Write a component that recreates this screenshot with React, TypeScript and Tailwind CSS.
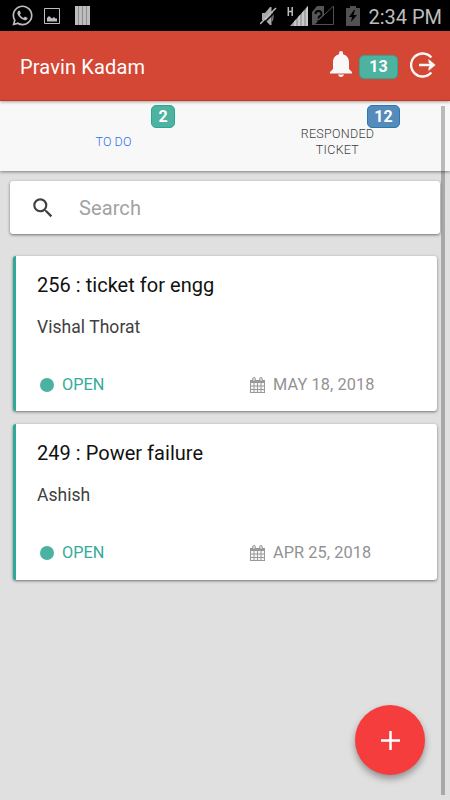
import { FaWhatsapp } from "react-icons/fa";
import { MdSearch } from "react-icons/md";

const tickets = [
    { id: 256, title: "ticket for engg", name: "Vishal Thorat", status: "OPEN", date: "MAY 18, 2018", size: "h-[155px]", gap: "mt-[18px]" },
    { id: 249, title: "Power failure", name: "Ashish", status: "OPEN", date: "APR 25, 2018", size: "h-[156px]", gap: "mt-[18px]" },
];

function StatusBar() {
    return (
        <div className="flex h-[31px] items-center bg-black pl-[11px] pr-2 text-[#bdbdbd]">
            <FaWhatsapp className="h-[23px] w-[23px]" />
            <svg className="ml-[10px] h-4 w-4" viewBox="0 0 16 16">
                <path d="M.5.5h15v15H.5z" fill="none" stroke="currentColor" />
                <path d="M3 13.500V10l2-2 3 2.500 2-1.500 1.500 1.500H13v3z" fill="currentColor" />
            </svg>
            <svg className="ml-[15px] h-[19px] w-[15px]" viewBox="0 0 15 19">
                <path d="M0 0h15v19H0z" fill="#8d8d8d" />
                <path d="M0 0h3v19H0zM4 0h3v19H4zM8 0h3v19H8zM12 0h3v19h-3z" fill="currentColor" />
            </svg>
            <div className="flex-1" />
            <svg className="h-5 w-[17px]" viewBox="0 0 17 20">
                <path d="M2 7h3l5-6h1.500v18H10l-5-5H2z" fill="#aaa" />
                <path d="M12 5q2 5 0 10" stroke="#777" strokeWidth="1.500" fill="none" />
                <path d="M1.500 19.500 17.500 3.500" stroke="#000" strokeWidth="1.500" />
                <path d="M0 18 16 2" stroke="#bdbdbd" strokeWidth="1.500" />
            </svg>
            <svg className="ml-[10px] h-5 w-[22px]" viewBox="0 0 22 20">
                <path d="M1.300 1v9M5.200 1v9M1 5.500h4" stroke="#bdbdbd" strokeWidth="1.500" fill="none" />
                <path d="M3 20 21 0v20z" fill="#a5a5a5" />
                <path d="M7 20v-4.400l2-2.200V20zM11 20v-8.900l2-2.200V20zM15 20V6.700l2-2.200V20zM19 20V2.200L21 0v20z" fill="#c8c8c8" />
            </svg>
            <svg className="ml-[3px] h-[19px] w-[22px]" viewBox="0 0 22 19">
                <path d="M0 6 5 0h7v9l-10 10H0z" fill="#555" />
                <path d="M2 18.500 21.500 0v18.500z" fill="none" stroke="#505050" />
                <path d="M3.500 8q0-3 3-3t3 3q0 1.500-2 2.500-1 .5-1 2M6.500 14v2" stroke="#050505" strokeWidth="2" fill="none" />
            </svg>
            <svg className="ml-3 h-5 w-[14px]" viewBox="0 0 14 20">
                <path d="M4 0h6v2h4v18H0V2h4z" fill="#515151" />
                <path d="M8 4 3 11h3l-1 5 6-7H7.500L9 4z" fill="#000" />
            </svg>
            <span className="ml-[8px] whitespace-nowrap pt-0.5 text-[20px] leading-none">2:34 PM</span>
        </div>
    );
}

function Header() {
    return (
        <header className="relative z-10 flex h-[70px] items-center border-b border-[#c83420] bg-[#d54735] pl-5 pr-[14px] shadow-[0_1px_3px_rgba(0,0,0,0.35)]">
            <h1 className="flex-1 pt-0.5 text-xl tracking-[0.15px] text-white">Pravin Kadam</h1>
            <svg className="mb-[3px] h-[26px] w-[22px]" viewBox="0 0 22 26">
                <path
                    d="M11 26a3 3 0 0 0 3-2.500H8A3 3 0 0 0 11 26zM19 18v-7c0-4-2.500-7-6-7.800V2a2 2 0 0 0-4 0v1.200C5.500 4 3 7 3 11v7L0 21v1.500h22V21z"
                    fill="#f8f8f8"
                />
            </svg>
            <span className="ml-[7px] mt-[2px] flex h-6 w-[39px] items-center justify-center rounded-[5px] border border-[#27a996] bg-[#4eb2a1] text-base font-bold text-white">
                13
            </span>
            <svg className="mb-[2px] ml-3 h-[26px] w-[26px]" viewBox="0 0 26 26">
                <path d="M21.300 5.500a11.500 11.500 0 1 0 0 15M9 13h13" fill="none" stroke="#f8f8f8" strokeWidth="2.400" />
                <path d="m18.500 7 7 6-7 6v-3.200l2-2.800-2-2.800z" fill="#f8f8f8" />
            </svg>
        </header>
    );
}

function Tabs() {
    return (
        <nav className="flex h-[70px] bg-[#f8f8f8] text-xs leading-4 shadow-[0_1px_3px_rgba(0,0,0,0.45)]">
            <div className="relative flex flex-1 items-center justify-center pt-3 text-[#2f70f0]">
                <span className="ml-0.5 text-[12.500px] font-light tracking-[0.1px]">TO DO</span>
                <span className="absolute left-[151px] top-1 flex h-[23px] w-6 items-center justify-center rounded-[5px] border border-[#27a996] bg-[#4eb2a1] text-base font-bold text-white">
                    2
                </span>
            </div>
            <div className="relative flex flex-1 items-center justify-center pt-3 text-center text-[#404040]">
                <span className="text-[12.500px] font-light tracking-[0.3px]">
                    RESPONDED
                    <br />
                    TICKET
                </span>
                <span className="absolute left-[142px] top-1 flex h-[23px] w-[33px] items-center justify-center rounded-[5px] border border-[#2878b2] bg-[#558bbb] text-base font-bold text-white">
                    12
                </span>
            </div>
        </nav>
    );
}

function CalendarIcon() {
    return (
        <svg className="-mt-px h-4 w-[15px]" viewBox="0 0 15 16">
            <path d="M0 3h15v13H0z" fill="#999" />
            <path
                d="M1 6h2.500v2.500H1zM4.500 6H7v2.500H4.500zM8 6h2.500v2.500H8zM11.500 6H14v2.500h-2.500zM1 9.500h2.500V12H1zM4.500 9.500H7V12H4.500zM8 9.500h2.500V12H8zM11.500 9.500H14V12h-2.500zM1 13h2.500v2H1zM4.500 13H7v2H4.500zM8 13h2.500v2H8zM11.500 13H14v2h-2.500z"
                fill="#f6f6f6"
            />
            <rect x="2.700" y=".5" width="2.600" height="4" rx="1.200" fill="#ddd" stroke="#888" strokeWidth=".8" />
            <rect x="9.700" y=".5" width="2.600" height="4" rx="1.200" fill="#ddd" stroke="#888" strokeWidth=".8" />
        </svg>
    );
}

function App() {
    return (
        <div className="relative h-[800px] w-[450px] overflow-hidden bg-[#e0e0e0] font-[Roboto,sans-serif]">
            <StatusBar />
            <Header />
            <Tabs />
            <div className="ml-[10px] mt-[10px] flex h-[53px] w-[430px] items-center rounded-[3px] bg-white shadow-[0_1px_3px_rgba(0,0,0,0.5)]">
                <MdSearch className="ml-5 h-[26px] w-[26px] text-[#404040]" />
                <span className="ml-[23px] text-xl tracking-[0.1px] text-[#a2a2a2]">Search</span>
            </div>
            <div className="ml-[13px] mt-[22px] flex w-[424px] flex-col gap-[13px]">
                {tickets.map((ticket) => (
                    <div
                        key={ticket.id}
                        className={`${ticket.size} rounded-[3px] border-l-[3px] border-[#2faa98] bg-white pl-[21px] pt-[15px] shadow-[0_1px_3px_rgba(0,0,0,0.5)]`}
                    >
                        <h2 className="text-xl leading-7 tracking-[0.03px] text-[#111]">
                            {ticket.id} : {ticket.title}
                        </h2>
                        <p className={`${ticket.gap} text-[17.500px] leading-5 tracking-[0.05px] text-[#404040]`}>{ticket.name}</p>
                        <div className="mt-[38px] flex h-5 items-center text-[16.300px]">
                            <span className="ml-[3px] h-[14px] w-[14px] rounded-full bg-[#4bb2a2]" />
                            <span className="ml-2 w-[188px] text-[#35ab9a]">{ticket.status}</span>
                            <CalendarIcon />
                            <span className="ml-2 tracking-[0.1px] text-[#929292]">{ticket.date}</span>
                        </div>
                    </div>
                ))}
            </div>
            <button
                aria-label="Add ticket"
                className="absolute left-[355px] top-[705px] flex h-[70px] w-[70px] items-center justify-center rounded-full bg-[#f63d3d] shadow-[0_4px_7px_rgba(0,0,0,0.35)]"
            >
                <svg className="h-5 w-5" viewBox="0 0 20 20">
                    <path d="M10.500 1v19M1 10.500h19" stroke="#fff" strokeWidth="2.500" />
                </svg>
            </button>
            <div className="absolute left-[441px] top-[106px] z-20 h-[689px] w-1 bg-black/25" />
        </div>
    );
}

export default App;
